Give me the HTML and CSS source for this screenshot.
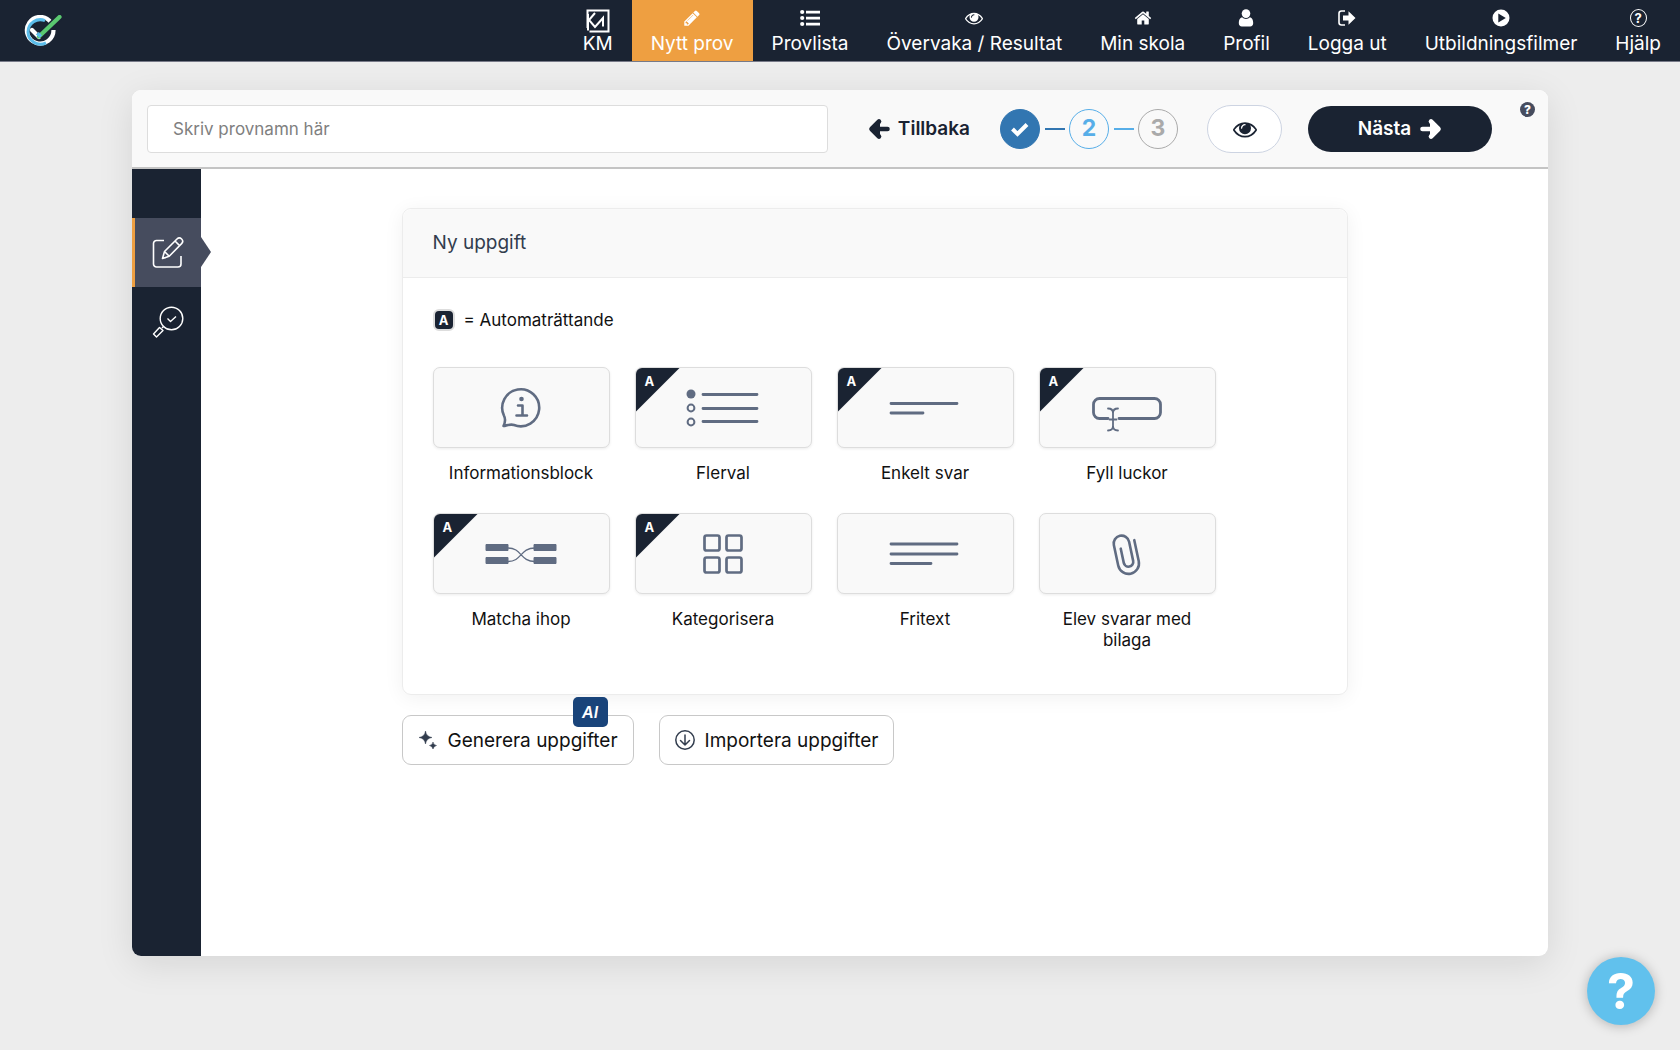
FILE: index.html
```html
<!DOCTYPE html>
<html lang="sv">
<head>
<meta charset="utf-8">
<meta name="viewport" content="width=device-width, initial-scale=1">
<title>Nytt prov</title>
<link rel="stylesheet" href="styles.css">
</head>
<body>
<svg class="defs" aria-hidden="true">
  <symbol id="eye" viewBox="0 0 1792 1792"><path d="M1664 960q-152-236-381-353 61 104 61 225 0 185-131.500 316.500t-316.500 131.500-316.500-131.500-131.500-316.500q0-121 61-225-229 117-381 353 133 205 333.500 326.500t434.500 121.500 434.500-121.500 333.500-326.500zm-720-384q0-20-14-34t-34-14q-125 0-214.500 89.500t-89.500 214.500q0 20 14 34t34 14 34-14 14-34q0-86 61-147t147-61q20 0 34-14t14-34zm848 384q0 34-20 69-140 230-376.500 368.500t-499.500 138.500-499.500-139-376.500-368q-20-35-20-69t20-69q140-229 376.500-368t499.500-139 499.500 139 376.500 368q20 35 20 69z"/></symbol>
  <symbol id="arrow" viewBox="0 0 22 22"><path d="M2.500 11H16M11 3.500l7.500 7.500-7.500 7.500" fill="none" stroke="currentColor" stroke-width="4.600" stroke-linecap="round" stroke-linejoin="round"/><path d="M10 4v14l9-7z"/></symbol>
</svg>

<header class="topbar">
  <a class="brand" href="#" aria-label="Startsida">
    <svg width="40" height="34" viewBox="0 0 40 34" fill="none">
      <path d="M27.800 7.200A13.300 13.300 0 1 0 30.500 15" stroke="#fff" stroke-width="4.200"/>
      <path d="M22 5.600a12.400 12.400 0 0 0-17 11.400 12.400 12.400 0 0 0 18 10.800" stroke="#5bbdea" stroke-width="3"/>
      <path d="M9 15l7 7" stroke="#fff" stroke-width="4.200" stroke-linecap="round"/>
      <path d="M16 21.500L36 2.500" stroke="#1a2332" stroke-width="7"/>
      <path d="M16 21.500L36.500 2" stroke="#5ac870" stroke-width="4.200" stroke-linecap="round"/>
      <path d="M13.500 19.500l3 3 2-2-2.500-3z" fill="#5bbdea" stroke="#5bbdea"/>
    </svg>
  </a>
  <nav class="menu">
    <a href="#"><svg class="km" viewBox="0 0 24 24" fill="none" stroke="currentColor" stroke-width="2"><path d="M1.500 19V1.500h21v21h-19"/><path d="M2 18V5M9 4L3 11l6 7 8-9v8.500M2 21.500v-4"/></svg><span>KM</span></a>
    <a href="#" class="current"><svg viewBox="0 0 1792 1792"><path d="M491 1536l91-91-235-235-91 91v107h128v128h107zm523-928q0-22-22-22-10 0-17 7l-542 542q-7 7-7 17 0 22 22 22 10 0 17-7l542-542q7-7 7-17zm-54-192l416 416-832 832h-416v-416zm683 96q0 53-37 90l-166 166-416-416 166-165q36-38 90-38 53 0 91 38l235 234q37 39 37 91z"/></svg><span>Nytt prov</span></a>
    <a href="#"><svg class="wide" viewBox="0 0 20 18"><circle cx="2.200" cy="3" r="2.100"/><circle cx="2.200" cy="9" r="2.100"/><circle cx="2.200" cy="15" r="2.100"/><path d="M6 1.700h14v2.700H6zM6 7.700h14v2.700H6zM6 13.700h14v2.700H6z"/></svg><span>Provlista</span></a>
    <a href="#"><svg class="wide" viewBox="0 0 1792 1792"><use href="#eye"/></svg><span>Övervaka / Resultat</span></a>
    <a href="#"><svg viewBox="0 0 1792 1792"><path d="M1472 992v480q0 26-19 45t-45 19h-384v-384h-256v384h-384q-26 0-45-19t-19-45v-480q0-1 .5-3t.5-3l575-474 575 474q1 2 1 6zm223-69l-62 74q-8 9-21 11h-3q-13 0-21-7l-692-577-692 577q-12 8-24 7-13-2-21-11l-62-74q-8-10-7-23.500t11-21.500l719-599q32-26 76-26t76 26l244 204v-195q0-14 9-23t23-9h192q14 0 23 9t9 23v408l219 182q10 8 11 21.500t-7 23.500z"/></svg><span>Min skola</span></a>
    <a href="#"><svg viewBox="0 0 18 18"><circle cx="9" cy="4.600" r="4.300"/><path d="M5 8.300a5.500 5.500 0 0 0 8 0c2.200.4 3.200 2.800 3.200 5.700 0 2-1.200 3.500-3 3.500H4.800c-1.800 0-3-1.500-3-3.500 0-2.900 1-5.300 3.200-5.700z"/></svg><span>Profil</span></a>
    <a href="#"><svg viewBox="0 0 18 18"><path d="M7 2H3.500Q1 2 1 4.500v9Q1 16 3.500 16H7" fill="none" stroke="currentColor" stroke-width="1.600"/><path d="M5 6.500h5.500V2.300L17.500 9l-7 6.700v-4.200H5z"/></svg><span>Logga ut</span></a>
    <a href="#"><svg viewBox="0 0 18 18"><path fill-rule="evenodd" d="M9 .5a8.500 8.500 0 1 0 0 17 8.500 8.500 0 0 0 0-17zM6.300 4.500l7.500 4.500-7.500 4.500z"/></svg><span>Utbildningsfilmer</span></a>
    <a href="#"><i class="q-outline">?</i><span>Hjälp</span></a>
  </nav>
</header>

<main class="editor">
  <div class="toolbar">
    <input class="name" type="text" placeholder="Skriv provnamn här" aria-label="Provnamn">
    <button class="back" type="button"><svg class="flip" width="22" height="22"><use href="#arrow"/></svg>Tillbaka</button>
    <ol class="steps">
      <li class="done"><svg width="20" height="20" viewBox="0 0 20 20" fill="none" stroke="#fff" stroke-width="4"><path d="M2.500 10l5 5L17 5.500"/></svg></li>
      <li class="active">2</li>
      <li>3</li>
    </ol>
    <button class="preview" type="button" aria-label="Förhandsgranska"><svg width="24" height="24"><use href="#eye"/></svg></button>
    <button class="next" type="button">Nästa<svg width="22" height="22"><use href="#arrow"/></svg></button>
    <button class="tip" type="button">?</button>
  </div>
  <div class="body">
    <nav class="side">
      <a href="#" class="selected" aria-label="Redigera"><svg width="34" height="34" viewBox="0 0 34 34" fill="none" stroke="#fff" stroke-width="1.600" stroke-linejoin="round"><path d="M13 4.500H5.500a3 3 0 0 0-3 3V28a3 3 0 0 0 3 3H27a3 3 0 0 0 3-3v-8"/><path d="M11.500 22.500l2-7L26 3a3.200 3.200 0 0 1 4.600 4.600L18.200 20.200zM13.500 15.500l4.700 4.700M24 5l4.600 4.600M11.500 22.500l3.500-1"/></svg></a>
      <a href="#" aria-label="Granska"><svg width="34" height="34" viewBox="0 0 34 34" fill="none" stroke="#fff" stroke-width="1.400" stroke-linejoin="round"><circle cx="20.500" cy="13.500" r="11.300"/><path d="M16.500 13.500l3 3 5.500-5M13 21l-2 2M8.500 22.500l3.500 3-6.500 6.500-3-3z"/></svg></a>
    </nav>
    <div class="content">
      <section class="panel">
        <h1>Ny uppgift</h1>
        <div class="inner">
          <p class="legend"><b>A</b>= Automaträttande</p>
          <div class="types">
            <button type="button"><span class="tile"><svg width="42" height="42" viewBox="0 0 42 42" fill="none" stroke="currentColor" stroke-width="2.600" stroke-linecap="round" stroke-linejoin="round"><path d="M3.500 39c1.700-3.500 2.300-7 .4-10.500A18.500 18.500 0 1 1 14 38c-3.500-1.200-6.500.2-10.500 1z"/><path d="M18 18.500h4.500v10M16.500 28.500H27"/><circle cx="21.500" cy="12" r="2.300" fill="currentColor" stroke="none"/></svg></span><span>Informationsblock</span></button>
            <button type="button"><span class="tile auto"><svg width="72" height="40" viewBox="0 0 72 40" fill="none" stroke="currentColor" stroke-width="2.800" stroke-linecap="round"><circle cx="4" cy="6" r="4.500" fill="currentColor" stroke="none"/><circle cx="4" cy="20" r="3.400" stroke-width="2"/><circle cx="4" cy="34" r="3.400" stroke-width="2"/><path d="M16 6.500h54M16 20.500h54M16 33.500h54"/></svg></span><span>Flerval</span></button>
            <button type="button"><span class="tile auto"><svg width="72" height="40" viewBox="0 0 72 40" fill="none" stroke="currentColor" stroke-width="2.800" stroke-linecap="round"><path d="M2 15.500h66M2 25h32"/></svg></span><span>Enkelt svar</span></button>
            <button type="button"><span class="tile auto"><svg width="72" height="40" viewBox="0 0 72 40" fill="none" stroke="currentColor" stroke-width="2.800" stroke-linecap="round"><path d="M17 30.500H8.500a6 6 0 0 1-6-6v-8a6 6 0 0 1 6-6h55a6 6 0 0 1 6 6v8a6 6 0 0 1-6 6H28"/><path d="M17 20.500q5 0 5 4.500v13q0 4.500-5 4.500M27 20.500q-5 0-5 4.500v13q0 4.500 5 4.500M18.500 31.500h7" stroke-width="1.800"/></svg></span><span>Fyll luckor</span></button>
            <button type="button"><span class="tile auto"><svg width="72" height="40" viewBox="0 0 72 40" fill="none" stroke="currentColor"><path d="M1 10.500h22v6H1zM1 23.500h22v6H1zM49 10.500h22v6H49zM49 23.500h22v6H49z" fill="currentColor" stroke-linejoin="round" stroke-width="1"/><path d="M23 14c14 0 12 13.500 27 13.500M23 27.500C37 27.500 35 14 50 14" stroke-width="1.300"/></svg></span><span>Matcha ihop</span></button>
            <button type="button"><span class="tile auto"><svg width="40" height="40" viewBox="0 0 40 40" fill="none" stroke="currentColor" stroke-width="2.700"><rect x="1.500" y="1.500" width="15" height="15" rx="2"/><rect x="23.500" y="1.500" width="15" height="15" rx="2"/><rect x="1.500" y="23.500" width="15" height="15" rx="2"/><rect x="23.500" y="23.500" width="15" height="15" rx="2"/></svg></span><span>Kategorisera</span></button>
            <button type="button"><span class="tile"><svg width="72" height="40" viewBox="0 0 72 40" fill="none" stroke="currentColor" stroke-width="2.800" stroke-linecap="round"><path d="M2 10h66M2 20h66M2 29.500h40"/></svg></span><span>Fritext</span></button>
            <button type="button"><span class="tile"><svg width="42" height="42" viewBox="0 0 42 42" fill="none" stroke="currentColor" stroke-width="2.600" stroke-linecap="round"><path transform="rotate(-12 21 21)" d="M31 9v21.500a10.500 10.500 0 0 1-21 0V9.500a7.800 7.800 0 0 1 15.600 0V29a4.800 4.800 0 0 1-9.600 0V14.500"/></svg></span><span>Elev svarar med bilaga</span></button>
          </div>
        </div>
      </section>
      <div class="actions">
        <button type="button"><svg width="20" height="20" viewBox="0 0 20 20"><path d="M7.500 1q.8 5.700 6.500 6.500-5.700.8-6.500 6.500Q6.700 8.300 1 7.500 6.700 6.700 7.500 1zM15 12q.6 3.100 3.500 3.500-2.900.6-3.500 3.500-.6-2.900-3.500-3.500 2.900-.4 3.500-3.500z" stroke="currentColor" stroke-width=".5" stroke-linejoin="round"/></svg>Generera uppgifter<em>AI</em></button>
        <button type="button"><svg width="20" height="20" viewBox="0 0 20 20" fill="none" stroke="currentColor" stroke-width="1.500" stroke-linecap="round" stroke-linejoin="round"><circle cx="10" cy="10" r="9.200"/><path d="M10 5v10M5.500 10.500L10 15l4.500-4.500"/></svg>Importera uppgifter</button>
      </div>
    </div>
  </div>
</main>
<button class="fab" type="button" aria-label="Hjälp">?</button>
</body>
</html>
```
FILE: styles.css
```css
*, *::before, *::after { box-sizing: border-box; }
body {
  margin: 0;
  min-height: 100vh;
  background: #ededed;
  color: #111;
  font: 17px/21px Inter, "Liberation Sans", sans-serif;
}
.defs { display: none; }
svg { fill: currentColor; flex: none; }
svg[fill="none"] { fill: none; }
a { color: inherit; text-decoration: none; }
button { font: inherit; color: inherit; padding: 0; border: 0; background: none; cursor: pointer; }

.topbar {
  display: flex;
  justify-content: space-between;
  height: 62px;
  background: #1a2332;
  border-bottom: 1px solid #777a88;
  color: #fff;
}
.brand { padding: 15px 23px; }
.brand svg { display: block; }
.menu { display: flex; font-size: 19px; line-height: 24px; white-space: nowrap; }
.menu a { display: flex; flex-direction: column; align-items: center; gap: 5px; padding: 9px 19px 0; }
.menu svg { width: 18px; height: 18px; }
.menu .wide { width: 20px; }
.menu .km { width: 24px; height: 24px; margin-bottom: -6px; }
.menu .current { background: #ee9f41; }
.q-outline {
  width: 17px; height: 18px;
  border: 1px solid #fff; border-radius: 50%;
  font: bold 13px/16px Inter, sans-serif;
  text-align: center;
}

.editor {
  display: flex;
  flex-direction: column;
  width: calc(100% - 264px);
  min-height: 866px;
  margin: 28px auto 0;
  border-radius: 9px;
  background: #fff;
  box-shadow: 0 8px 36px rgba(0, 0, 0, .1);
}
.toolbar {
  display: flex;
  align-items: center;
  height: 79px;
  padding: 0 13px 0 15px;
  background: #f9f9f9;
  border-bottom: 2px solid #c4c4c4;
  border-radius: 9px 9px 0 0;
}
.name {
  flex: 1;
  min-width: 120px;
  height: 48px;
  padding: 0 25px;
  border: 1px solid #ddd;
  border-radius: 4px;
  font: 17px/21px Inter, sans-serif;
  color: #111;
}
.name::placeholder { color: #808080; }
.back { display: flex; align-items: center; gap: 8px; margin: 0 30px 0 40px; font-size: 19px; font-weight: 600; color: #1a2332; }
.flip { transform: scaleX(-1); }
.steps { display: flex; gap: 29px; margin: 0; padding: 0; list-style: none; }
.steps li {
  position: relative;
  display: flex;
  align-items: center;
  justify-content: center;
  width: 40px; height: 40px;
  border: 1px solid #aaa; border-radius: 50%;
  color: #aaa;
  font-size: 23px; font-weight: 700;
}
.steps .done { background: #3276b1; border-color: #3276b1; }
.steps .active { border-color: #57aee8; color: #57aee8; }
.steps li + li::before {
  content: "";
  position: absolute;
  left: -25px; top: 18px;
  width: 20px; height: 2px;
  background: #57aee8;
}
.steps .active::before { background: #3276b1 !important; }
.preview { width: 75px; height: 48px; margin: 0 26px 0 29px; border: 1px solid #cdd4e2; border-radius: 24px; background: #fff; color: #1a2332; }
.preview svg { display: block; margin: auto; }
.next { display: flex; align-items: center; justify-content: center; gap: 9px; width: 184px; height: 46px; border-radius: 23px; background: #1a2332; color: #fff; font-size: 19px; font-weight: 600; }
.tip { align-self: flex-start; width: 15px; height: 15px; margin: 12px 0 0 28px; border-radius: 50%; background: #464c5e; color: #fff; font-size: 12px; line-height: 15px; font-weight: 800; }

.body { display: flex; flex: 1; }
.side { width: 69px; padding-top: 49px; background: #1a2332; border-radius: 0 0 0 9px; }
.side a { position: relative; display: flex; align-items: center; justify-content: center; height: 69px; }
.side .selected { background: #464c5e; }
.side .selected::before { content: ""; position: absolute; left: 0; top: 0; bottom: 0; width: 3px; background: #ee9f41; }
.side .selected::after { content: ""; position: absolute; left: 100%; top: 19px; border: solid transparent; border-width: 15px 0 15px 10px; border-left-color: #464c5e; }
.side svg { margin-left: 3px; }

.content { flex: 1; padding: 39px 32px; }
.panel { max-width: 946px; margin: 0 auto; border: 1px solid #ececec; border-radius: 9px; box-shadow: 0 3px 20px rgba(0, 0, 0, .06); }
h1 { margin: 0; padding: 23px 30px; background: #f9f9f9; border-bottom: 1px solid #ececec; border-radius: 9px 9px 0 0; color: #323d4e; font-size: 19px; line-height: 22px; font-weight: 400; }
.inner { padding: 30px 30px 43px; }
.legend { display: flex; align-items: center; gap: 9px; height: 24px; margin: 0 0 35px; }
.legend b { width: 22px; height: 22px; border: 2px solid #ddd; border-radius: 6px; background: #1a2332; color: #fff; font-size: 13px; line-height: 18px; text-align: center; }
.types { display: grid; grid-template-columns: repeat(auto-fill, 177px); gap: 29px 25px; max-width: 783px; }
.types button { display: flex; flex-direction: column; align-items: center; gap: 15px; padding: 0; color: #111; }
.types button > span:last-child { max-width: 149px; }
.tile {
  position: relative;
  display: flex;
  align-items: center;
  justify-content: center;
  width: 100%; height: 81px;
  border: 1px solid #ddd; border-radius: 7px;
  background: #f9f9f9;
  box-shadow: 0 1px 3px rgba(0, 0, 0, .08);
  color: #606c82;
  overflow: hidden;
}
.tile svg { overflow: visible; }
.auto::before {
  content: "A";
  position: absolute;
  left: 0; top: 0;
  width: 44px; height: 44px;
  padding: 3px 0 0 9px;
  background: #1a2332;
  clip-path: polygon(0 0, 100% 0, 0 100%);
  color: #fff;
  font-size: 13px;
  font-weight: 700;
  text-align: left;
}
.actions { display: flex; gap: 25px; max-width: 946px; margin: 20px auto 0; }
.actions button { position: relative; display: flex; align-items: center; gap: 10px; height: 50px; padding: 0 15px; border: 1px solid #c8c8c8; border-radius: 9px; font-size: 19px; }
.actions svg { color: #323d4e; }
.actions em { position: absolute; right: 25px; top: -19px; width: 35px; height: 30px; border-radius: 5px; background: #19447a; color: #fff; font-size: 16px; line-height: 30px; font-weight: 600; }

.fab { position: fixed; right: 25px; bottom: 25px; width: 68px; height: 68px; border-radius: 50%; background: #61c1ed; color: #fff; font-size: 50px; line-height: 68px; font-weight: 700; box-shadow: 0 1px 12px rgba(0, 0, 0, .25); }
```
